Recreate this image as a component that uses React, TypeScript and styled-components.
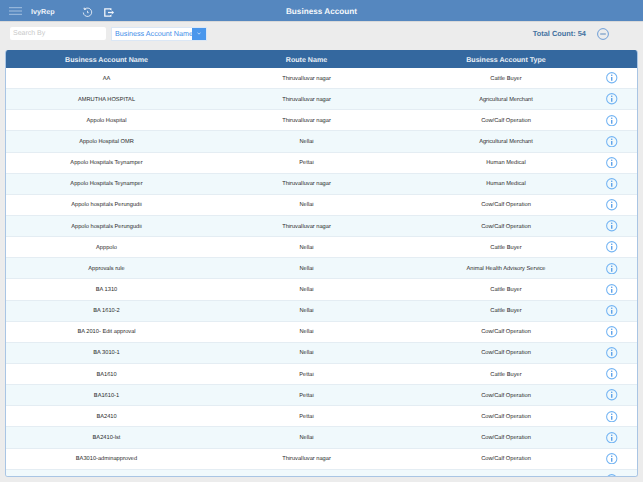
import React from 'react';
import styled, { createGlobalStyle } from 'styled-components';

const GlobalStyle = createGlobalStyle`
  html, body {
    margin: 0;
    padding: 0;
    height: 100%;
    overflow: hidden;
    background: #ececec;
    font-family: "Liberation Sans", Arial, sans-serif;
    text-rendering: geometricPrecision;
    -webkit-font-smoothing: antialiased;
  }
`;

const Page = styled.div`
  width: 643px;
  height: 482px;
  display: flex;
  flex-direction: column;
  overflow: hidden;
`;

const Header = styled.header`
  height: 20px;
  padding-top: 1px;
  flex: none;
  background: #5587bf;
  display: grid;
  grid-template-columns: 1fr auto 1fr;
  align-items: center;
  color: #fff;
  border-bottom: 1px solid #d9d9d9;
`;

const HeaderLeft = styled.div`
  display: flex;
  align-items: center;
  height: 100%;
  padding-left: 9px;
`;

const Brand = styled.span`
  font-size: 7.2px;
  font-weight: bold;
  margin-left: 9px;
  width: 51px;
  color: #eef3fa;
`;

const MenuIcon = styled.svg`
  display: block;
  flex: none;
`;

const HistoryIcon = styled.svg`
  display: block;
  flex: none;
  margin: 2px 11px 0 0;
`;

const ExportIcon = styled.svg`
  display: block;
  flex: none;
  margin-top: 2px;
`;

const Title = styled.h1`
  margin: 0;
  font-size: 8.2px;
  font-weight: bold;
  color: #f4f7fb;
`;

const Toolbar = styled.div`
  height: 23px;
  flex: none;
  display: flex;
  align-items: center;
  padding: 0 34px 0 10px;
`;

const SearchBox = styled.div`
  width: 96px;
  height: 13px;
  box-sizing: border-box;
  background: #fff;
  border-radius: 2px;
  font-size: 7px;
  line-height: 13px;
  padding-left: 3px;
  color: #c9c9c9;
`;

const Select = styled.div`
  margin-left: 5px;
  width: 96px;
  height: 14px;
  box-sizing: border-box;
  display: flex;
  background: #fff;
  border: 1px solid #dbe7f5;
`;

const SelectText = styled.span`
  flex: 1;
  min-width: 0;
  font-size: 7.2px;
  line-height: 12px;
  padding-left: 3px;
  white-space: nowrap;
  color: #3f8ee8;
`;

const SelectArrow = styled.span`
  width: 14px;
  flex: none;
  background: #4a97ec;
  display: flex;
  align-items: center;
  justify-content: center;
`;

const TotalCount = styled.span`
  margin-left: auto;
  font-size: 7.4px;
  font-weight: bold;
  color: #44729f;
`;

const CollapseIcon = styled.svg`
  display: block;
  margin-left: 11px;
`;

const TableCard = styled.div`
  flex: none;
  height: 427px;
  margin: 5px 5px 0;
  box-sizing: border-box;
  background: #fff;
  border: 1px solid #a9c5e4;
  border-top: none;
  border-radius: 3px;
  overflow: hidden;
`;

const TableHead = styled.div`
  height: 18px;
  background: #34689f;
  display: grid;
  grid-template-columns: 201px 199px 200px 1fr;
  align-items: center;
  text-align: center;
  font-size: 7.1px;
  font-weight: bold;
  color: #e9eff6;
`;

const HeadCell = styled.span`
  padding-top: 1px;
`;

const Row = styled.div<{ $alt: boolean }>`
  height: 21.15px;
  box-sizing: border-box;
  display: grid;
  grid-template-columns: 201px 199px 200px 1fr;
  align-items: center;
  text-align: center;
  font-size: 5.7px;
  color: #2b2b2b;
  border-bottom: 1px solid #e4edf3;
  background: ${(p) => (p.$alt ? '#f0f9fc' : '#fff')};
`;

const Cell = styled.span`
  padding-top: 1px;
`;

const InfoWrap = styled.span`
  display: flex;
  justify-content: center;
  padding-right: 19px;
`;

const InfoIcon = () => (
  <svg width="11.5" height="11.5" viewBox="0 0 11 11" fill="none">
    <circle cx="5.5" cy="5.5" r="4.9" stroke="#73b4f3" strokeWidth="1" />
    <circle cx="5.5" cy="3.1" r="0.7" fill="#4a97e6" />
    <path d="M5.5 4.7v3.6" stroke="#4a97e6" strokeWidth="1.2" />
  </svg>
);

const rows = [
  ['AA', 'Thiruvalluvar nagar', 'Cattle Buyer'],
  ['AMRUTHA HOSPITAL', 'Thiruvalluvar nagar', 'Agricultural Merchant'],
  ['Appolo Hospital', 'Thiruvalluvar nagar', 'Cow/Calf Operation'],
  ['Appolo Hospital OMR', 'Nellai', 'Agricultural Merchant'],
  ['Appolo Hospitals Teynamper', 'Pettai', 'Human Medical'],
  ['Appolo Hospitals Teynamper', 'Thiruvalluvar nagar', 'Human Medical'],
  ['Appolo hospitals Perungudii', 'Nellai', 'Cow/Calf Operation'],
  ['Appolo hospitals Perungudii', 'Thiruvalluvar nagar', 'Cow/Calf Operation'],
  ['Apppolo', 'Nellai', 'Cattle Buyer'],
  ['Approvals rule', 'Nellai', 'Animal Health Advisory Service'],
  ['BA 1310', 'Nellai', 'Cattle Buyer'],
  ['BA 1610-2', 'Nellai', 'Cattle Buyer'],
  ['BA 2010- Edit approval', 'Nellai', 'Cow/Calf Operation'],
  ['BA 3010-1', 'Nellai', 'Cow/Calf Operation'],
  ['BA1610', 'Pettai', 'Cattle Buyer'],
  ['BA1610-1', 'Pettai', 'Cow/Calf Operation'],
  ['BA2410', 'Pettai', 'Cow/Calf Operation'],
  ['BA2410-lst', 'Nellai', 'Cow/Calf Operation'],
  ['BA3010-adminapproved', 'Thiruvalluvar nagar', 'Cow/Calf Operation'],
  ['', '', ''],
];

const App = () => (
  <Page>
    <GlobalStyle />
    <Header>
      <HeaderLeft>
        <MenuIcon width="13" height="8" viewBox="0 0 13 8" stroke="#b9cfe8" strokeWidth="0.8">
          <path d="M0 .7h13M0 4h13M0 7.3h13" />
        </MenuIcon>
        <Brand>IvyRep</Brand>
        <HistoryIcon width="11" height="11" viewBox="0 0 11 11" fill="none" stroke="#e6edf6" strokeWidth="0.9">
          <path d="M2.6 2.2A4.2 4.2 0 1 1 1.3 5.5" />
          <path d="M1.9 .8 2.6 2.4 4.2 2" strokeWidth="1.1" />
          <path d="M5.5 3.8v1.9h1.2" />
        </HistoryIcon>
        <ExportIcon width="10" height="9" viewBox="0 0 10 9" fill="none" stroke="#f2f6fb" strokeWidth="1.3">
          <path d="M6.8 2V.8H.8v7.4h6V7" />
          <path d="M4 4.5h5.6" />
          <path d="M7.6 3 9.3 4.5 7.6 6" strokeWidth="1" />
        </ExportIcon>
      </HeaderLeft>
      <Title>Business Account</Title>
      <span />
    </Header>
    <Toolbar>
      <SearchBox>Search By</SearchBox>
      <Select>
        <SelectText>Business Account Name</SelectText>
        <SelectArrow>
          <svg width="4" height="3" viewBox="0 0 4 3" fill="none" stroke="#e3effc" strokeWidth="0.7">
            <path d="M.5.6 2 2.2 3.5.6" />
          </svg>
        </SelectArrow>
      </Select>
      <TotalCount>Total Count: 54</TotalCount>
      <CollapseIcon width="12" height="12" viewBox="0 0 12 12" fill="none" stroke="#6d9dd6" strokeWidth="1">
        <circle cx="6" cy="6" r="5.4" />
        <path d="M3.2 6h5.6" stroke="#5f8cbf" />
      </CollapseIcon>
    </Toolbar>
    <TableCard>
      <TableHead>
        <HeadCell>Business Account Name</HeadCell>
        <HeadCell>Route Name</HeadCell>
        <HeadCell>Business Account Type</HeadCell>
        <span />
      </TableHead>
      {rows.map((r, i) => (
        <Row key={i} $alt={i % 2 === 1}>
          <Cell>{r[0]}</Cell>
          <Cell>{r[1]}</Cell>
          <Cell>{r[2]}</Cell>
          <InfoWrap>
            <InfoIcon />
          </InfoWrap>
        </Row>
      ))}
    </TableCard>
  </Page>
);

export default App;
